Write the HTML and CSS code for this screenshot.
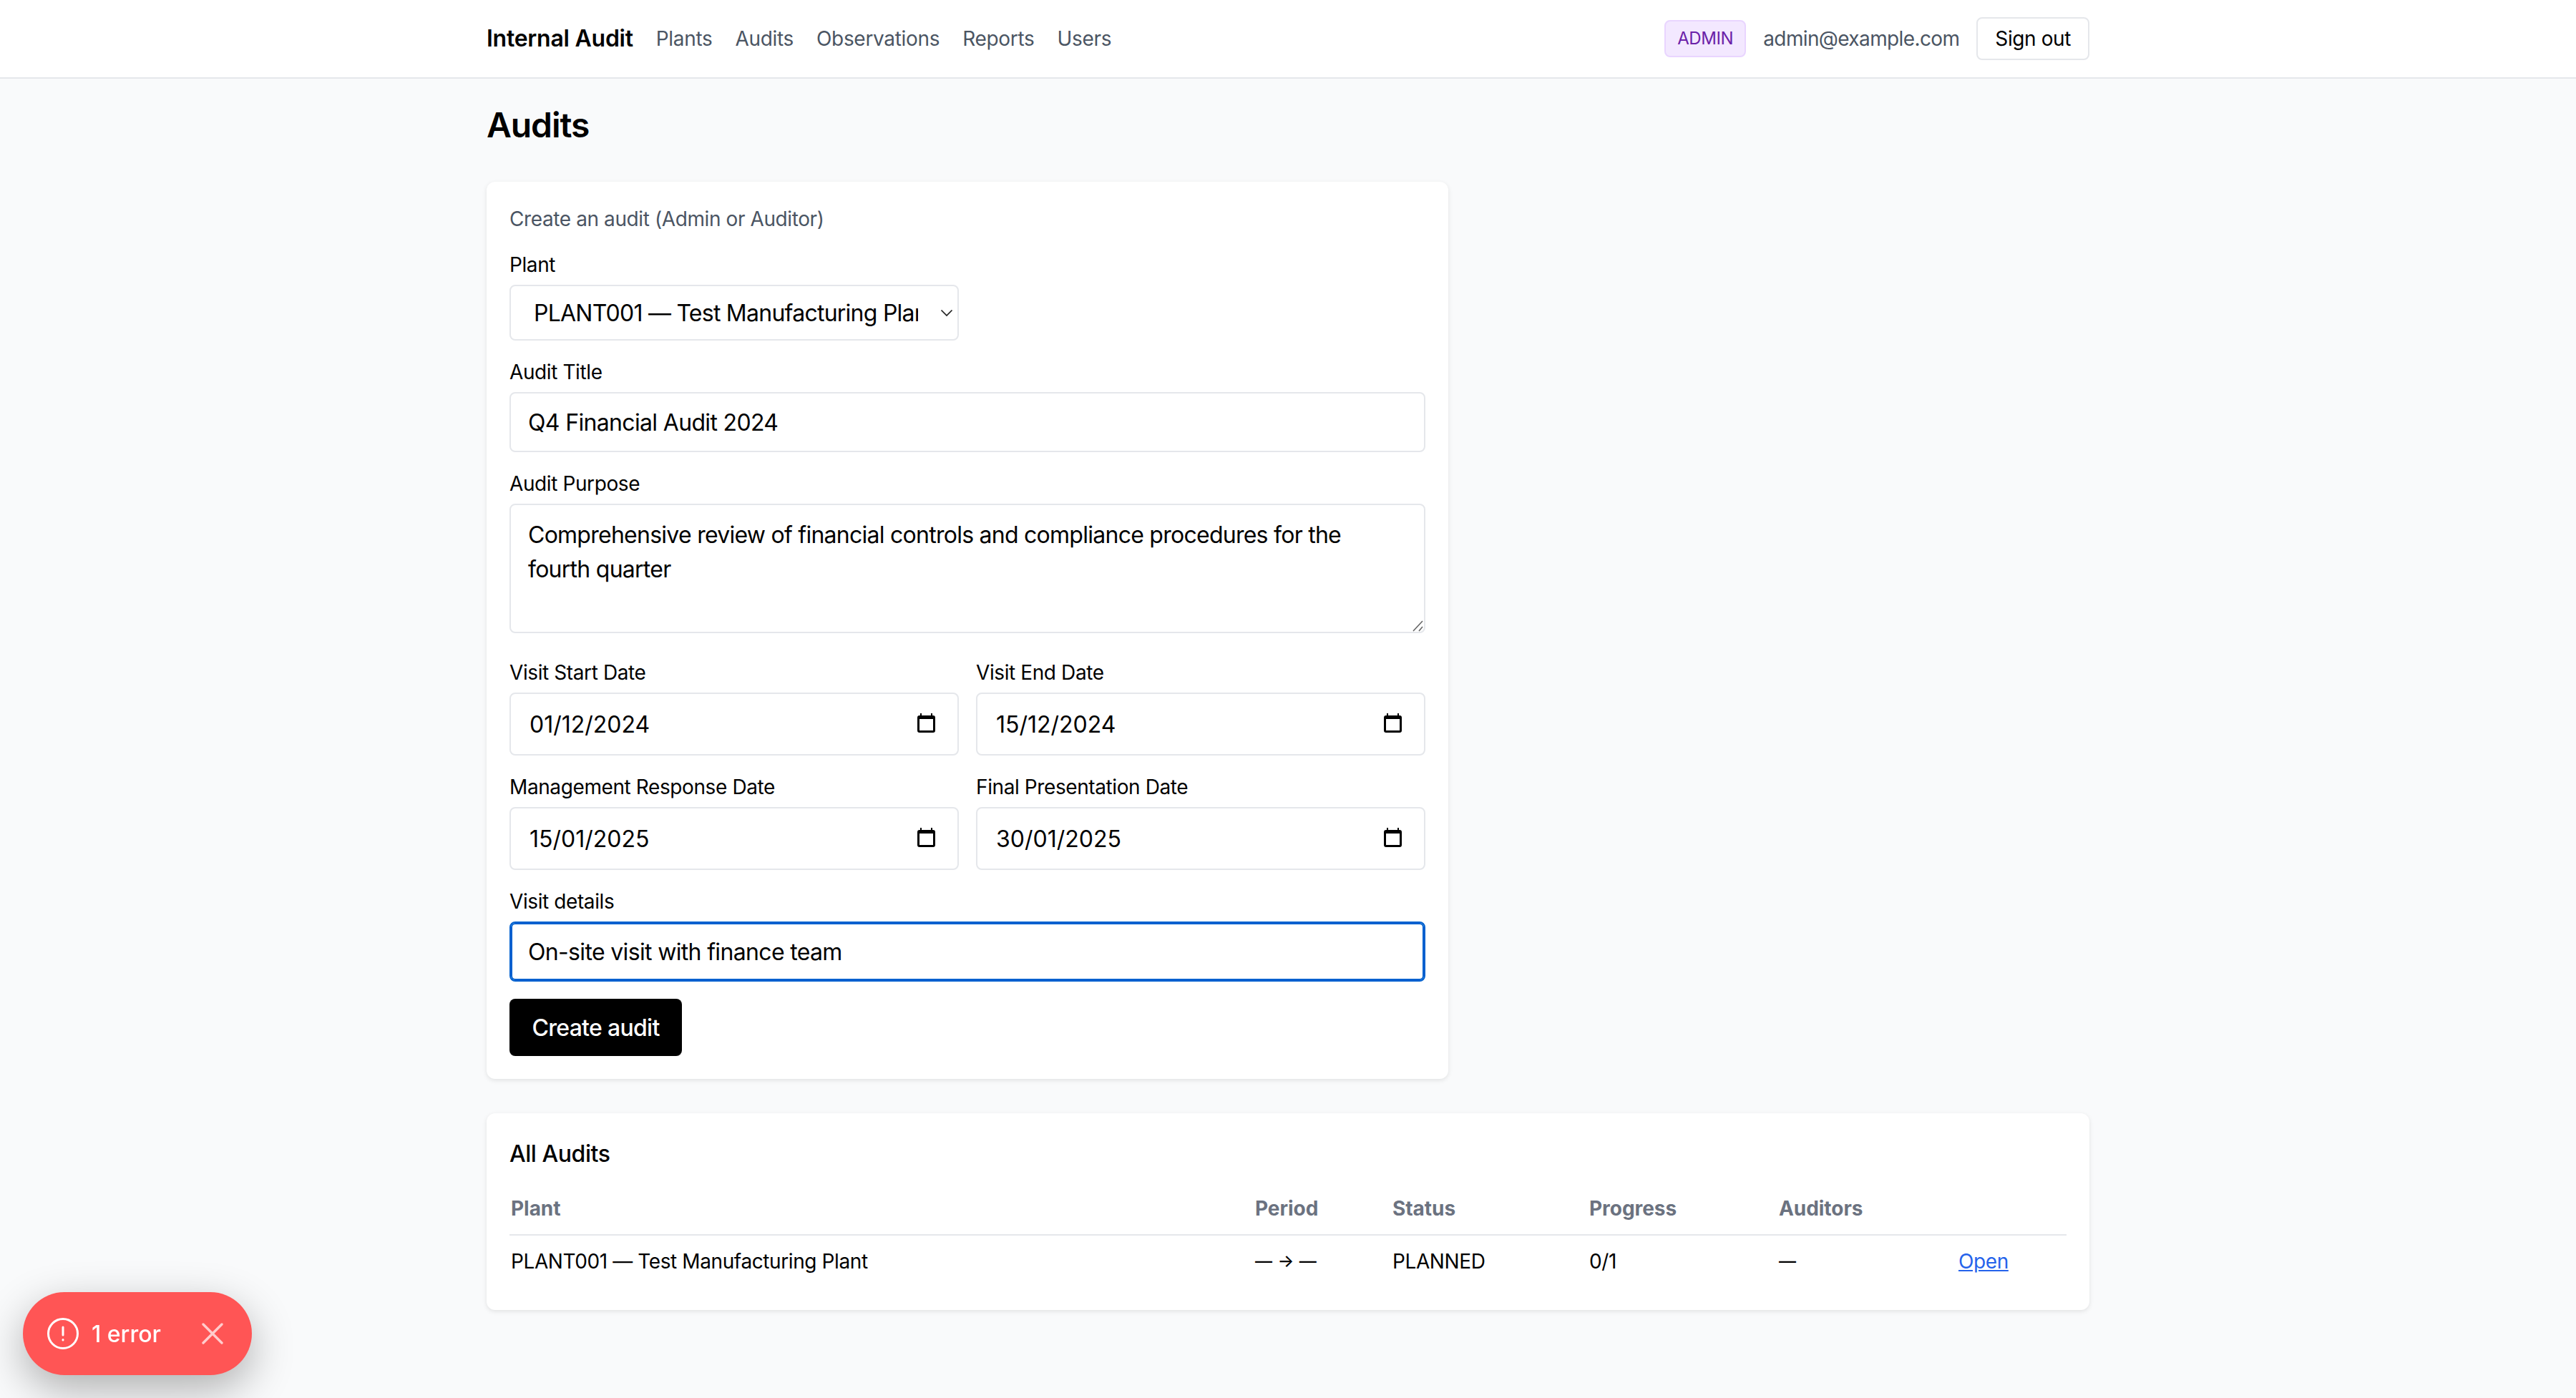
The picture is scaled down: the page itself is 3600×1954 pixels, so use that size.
FILE: index.html
```html
<!DOCTYPE html>
<html lang="en">
<head>
    <meta charset="UTF-8">
    <meta name="viewport" content="width=device-width, initial-scale=1.0">
    <title>Audits</title>
    <link rel="stylesheet" href="styles.css">
</head>
<body>
    <header class="topbar">
        <div class="topbarInner">
            <a class="brand" href="#">Internal Audit</a>
            <nav class="mainNav">
                <a href="#">Plants</a>
                <a href="#">Audits</a>
                <a href="#">Observations</a>
                <a href="#">Reports</a>
                <a href="#">Users</a>
            </nav>
            <div class="userBox">
                <span class="roleBadge">ADMIN</span>
                <span class="userEmail">admin@example.com</span>
                <button class="signOut" type="button">Sign out</button>
            </div>
        </div>
    </header>

    <main class="page">
        <h1>Audits</h1>

        <section class="card createCard">
            <p class="cardNote">Create an audit (Admin or Auditor)</p>
            <form class="auditForm" autocomplete="off">
                <div class="field">
                    <label for="plant">Plant</label>
                    <div class="selectWrap">
                        <select id="plant">
                            <option>PLANT001 — Test Manufacturing Plant</option>
                        </select>
                        <svg class="chevron" viewBox="0 0 16 10" fill="none" stroke="#222" stroke-width="1.4"><path d="M2 2l6 6 6-6"/></svg>
                    </div>
                </div>

                <div class="field">
                    <label for="title">Audit Title</label>
                    <input type="text" id="title" value="Q4 Financial Audit 2024">
                </div>

                <div class="field">
                    <label for="purpose">Audit Purpose</label>
                    <div class="textareaWrap">
                        <textarea id="purpose" rows="3">Comprehensive review of financial controls and compliance procedures for the fourth quarter</textarea>
                        <svg class="resizeGrip" viewBox="0 0 15 16" fill="none" stroke="#666" stroke-width="1.6"><path d="M1 15L14 1M9 15l5-6"/></svg>
                    </div>
                </div>

                <div class="dateGrid">
                    <div class="field">
                        <label for="start">Visit Start Date</label>
                        <div class="dateWrap">
                            <input type="text" id="start" value="01/12/2024">
                            <svg class="calIcon" viewBox="0 0 25 27"><path fill-rule="evenodd" d="M4 0h2v3h13V0h2v3h1a3 3 0 0 1 3 3v18a3 3 0 0 1-3 3H3a3 3 0 0 1-3-3V6a3 3 0 0 1 3-3h1zM3 8v16h19V8z"/></svg>
                        </div>
                    </div>
                    <div class="field">
                        <label for="end">Visit End Date</label>
                        <div class="dateWrap">
                            <input type="text" id="end" value="15/12/2024">
                            <svg class="calIcon" viewBox="0 0 25 27"><path fill-rule="evenodd" d="M4 0h2v3h13V0h2v3h1a3 3 0 0 1 3 3v18a3 3 0 0 1-3 3H3a3 3 0 0 1-3-3V6a3 3 0 0 1 3-3h1zM3 8v16h19V8z"/></svg>
                        </div>
                    </div>
                    <div class="field">
                        <label for="response">Management Response Date</label>
                        <div class="dateWrap">
                            <input type="text" id="response" value="15/01/2025">
                            <svg class="calIcon" viewBox="0 0 25 27"><path fill-rule="evenodd" d="M4 0h2v3h13V0h2v3h1a3 3 0 0 1 3 3v18a3 3 0 0 1-3 3H3a3 3 0 0 1-3-3V6a3 3 0 0 1 3-3h1zM3 8v16h19V8z"/></svg>
                        </div>
                    </div>
                    <div class="field">
                        <label for="final">Final Presentation Date</label>
                        <div class="dateWrap">
                            <input type="text" id="final" value="30/01/2025">
                            <svg class="calIcon" viewBox="0 0 25 27"><path fill-rule="evenodd" d="M4 0h2v3h13V0h2v3h1a3 3 0 0 1 3 3v18a3 3 0 0 1-3 3H3a3 3 0 0 1-3-3V6a3 3 0 0 1 3-3h1zM3 8v16h19V8z"/></svg>
                        </div>
                    </div>
                </div>

                <div class="field">
                    <label for="details">Visit details</label>
                    <input class="isFocused" type="text" id="details" value="On-site visit with finance team">
                </div>

                <div>
                    <button class="primaryBtn" type="button">Create audit</button>
                </div>
            </form>
        </section>

        <section class="card listCard">
            <h2>All Audits</h2>
            <table class="auditTable">
                <thead>
                    <tr>
                        <th class="colPlant">Plant</th>
                        <th class="colPeriod">Period</th>
                        <th class="colStatus">Status</th>
                        <th class="colProgress">Progress</th>
                        <th class="colAuditors">Auditors</th>
                        <th class="colAction"></th>
                    </tr>
                </thead>
                <tbody>
                    <tr>
                        <td>PLANT001 — Test Manufacturing Plant</td>
                        <td class="dashCell">— → —</td>
                        <td>PLANNED</td>
                        <td>0/1</td>
                        <td class="dashCell">—</td>
                        <td><a href="#">Open</a></td>
                    </tr>
                </tbody>
            </table>
        </section>
    </main>

    <!-- error toast, sits over the page -->
    <div class="errorToast">
        <svg class="toastIcon" viewBox="0 0 44 44" fill="none" stroke="#fff" stroke-width="3" stroke-linecap="round">
            <circle cx="22" cy="22" r="20.5"/>
            <path d="M22 13v11"/>
            <path d="M22 30.500v.5"/>
        </svg>
        <span class="toastText">1 error</span>
        <svg class="toastClose" viewBox="0 0 30 30" fill="none" stroke="#fff" stroke-opacity="0.7" stroke-width="3.4" stroke-linecap="round">
            <path d="M2 2l26 26M28 2L2 28"/>
        </svg>
    </div>
</body>
</html>
```

FILE: styles.css
```css
* {
    box-sizing: border-box;
}

body {
    margin: 0;
    min-height: 100vh;
    background-color: #f9fafb;
    color: #000;
    font-family: Inter, "Noto Sans", sans-serif;
    font-size: 28px;
    line-height: 40px;
    letter-spacing: -0.4px;
}

a {
    text-decoration: none;
    color: inherit;
}

/* top bar */
.topbar {
    height: 110px;
    background-color: #fff;
    border-bottom: 2px solid #e5e7eb;
}

.topbarInner {
    width: 2240px;
    height: 108px;
    margin: 0 auto;
    display: flex;
    align-items: center;
}

.brand {
    font-size: 32px;
    font-weight: 600;
    margin-right: 32px;
    letter-spacing: -0.25px;
}

.mainNav {
    display: flex;
    gap: 32px;
    color: #4b5563;
    letter-spacing: -0.32px;
}

.userBox {
    margin-left: auto;
    display: flex;
    align-items: center;
    gap: 24px;
}

.roleBadge {
    height: 52px;
    padding: 0 16px;
    display: flex;
    align-items: center;
    background-color: #f3e8ff;
    border: 2px solid #e9d5ff;
    border-radius: 8px;
    color: #6b21a8;
    font-size: 24px;
}

.userEmail {
    color: #4b5563;
    letter-spacing: -0.62px;
}

.signOut {
    height: 60px;
    padding: 0 24px;
    background-color: #fff;
    border: 2px solid #e5e7eb;
    border-radius: 8px;
    color: #000;
    font: inherit;
    letter-spacing: inherit;
}

/* page */
.page {
    width: 2240px;
    margin: 0 auto;
    padding-top: 33px;
}

h1 {
    margin: 0 0 47px;
    font-size: 48px;
    line-height: 64px;
    font-weight: 600;
    letter-spacing: -1.1px;
}

.card {
    background-color: #fff;
    border-radius: 12px;
    padding: 32px;
    box-shadow: 0 2px 6px rgba(0, 0, 0, 0.1);
}

.createCard {
    width: 1344px;
    margin-bottom: 48px;
}

.cardNote {
    margin: 0 0 24px;
    color: #4b5563;
}

.auditForm {
    display: flex;
    flex-direction: column;
    gap: 24px;
}

.field label {
    display: block;
    margin-bottom: 8px;
}

input[type=text], textarea, select {
    display: block;
    width: 100%;
    background-color: #fff;
    border: 2px solid #e5e7eb;
    border-radius: 8px;
    color: #000;
    font-family: inherit;
    font-size: 32px;
    letter-spacing: -0.66px;
    outline: none;
}

input[type=text] {
    height: 84px;
    padding: 0 24px;
}

.textareaWrap {
    position: relative;
    margin-bottom: 11px;
}

textarea {
    height: 181px;
    padding: 18px 24px;
    line-height: 48px;
    letter-spacing: -0.74px;
    resize: none;
}

.resizeGrip {
    position: absolute;
    right: 3px;
    bottom: 2px;
    width: 15px;
    height: 16px;
}

.selectWrap {
    position: relative;
    width: 628px;
}

select {
    height: 78px;
    padding: 0 55px 0 32px;
    letter-spacing: -0.75px;
    appearance: none;
}

.chevron {
    position: absolute;
    top: 33px;
    right: 7px;
    width: 20px;
    height: 12.5px;
}

.dateGrid {
    display: grid;
    grid-template-columns: 628px 628px;
    gap: 24px;
}

.dateGrid input[type=text] {
    height: 88px;
    padding: 0 26px;
    letter-spacing: 0;
}

.dateWrap {
    position: relative;
}

.calIcon {
    position: absolute;
    top: 29px;
    right: 33px;
    width: 25px;
    height: 27px;
}

input.isFocused {
    border-color: #0060cf;
    box-shadow: inset 0 0 0 2px #0060cf;
}

.primaryBtn {
    display: block;
    width: 241px;
    height: 80px;
    background-color: #000;
    border: none;
    border-radius: 8px;
    color: #fff;
    font-family: inherit;
    font-size: 32px;
    font-weight: 500;
    letter-spacing: -0.7px;
}

/* table */
h2 {
    margin: 0 0 23px;
    padding-top: 1px;
    font-size: 32px;
    line-height: 48px;
    font-weight: 500;
    letter-spacing: -0.45px;
}

.auditTable {
    width: 100%;
    table-layout: fixed;
    border-collapse: collapse;
}

.auditTable th {
    height: 66px;
    padding: 0 0 8px 2px;
    border-bottom: 2px solid #e5e7eb;
    color: #6b7280;
    font-weight: 700;
    letter-spacing: -0.05px;
    text-align: left;
}

.auditTable td {
    padding: 16px 0 16px 2px;
}

.auditTable td a {
    color: #2563eb;
    text-decoration: underline;
}

.auditTable .dashCell {
    font-size: 24px;
    font-weight: 500;
    letter-spacing: 0;
    word-spacing: 1px;
}

.colPlant { width: 1040px; }
.colPeriod { width: 192px; }
.colStatus { width: 275px; }
.colProgress { width: 265px; }
.colAuditors { width: 251px; }
.colAction { width: 153px; }

/* toast */
.errorToast {
    position: fixed;
    left: 32px;
    bottom: 32px;
    width: 320px;
    height: 116px;
    padding: 0 40px 0 34px;
    display: flex;
    align-items: center;
    background-color: #ff5555;
    border-radius: 58px;
    box-shadow: 0 20px 60px rgba(0, 0, 0, 0.3);
    color: #fff;
    font-size: 32px;
    font-weight: 500;
    letter-spacing: 0;
}

.toastIcon {
    width: 44px;
    height: 44px;
    margin-right: 18px;
}

.toastText {
    margin-top: 2px;
}

.toastClose {
    width: 30px;
    height: 30px;
    margin-left: auto;
}
```
